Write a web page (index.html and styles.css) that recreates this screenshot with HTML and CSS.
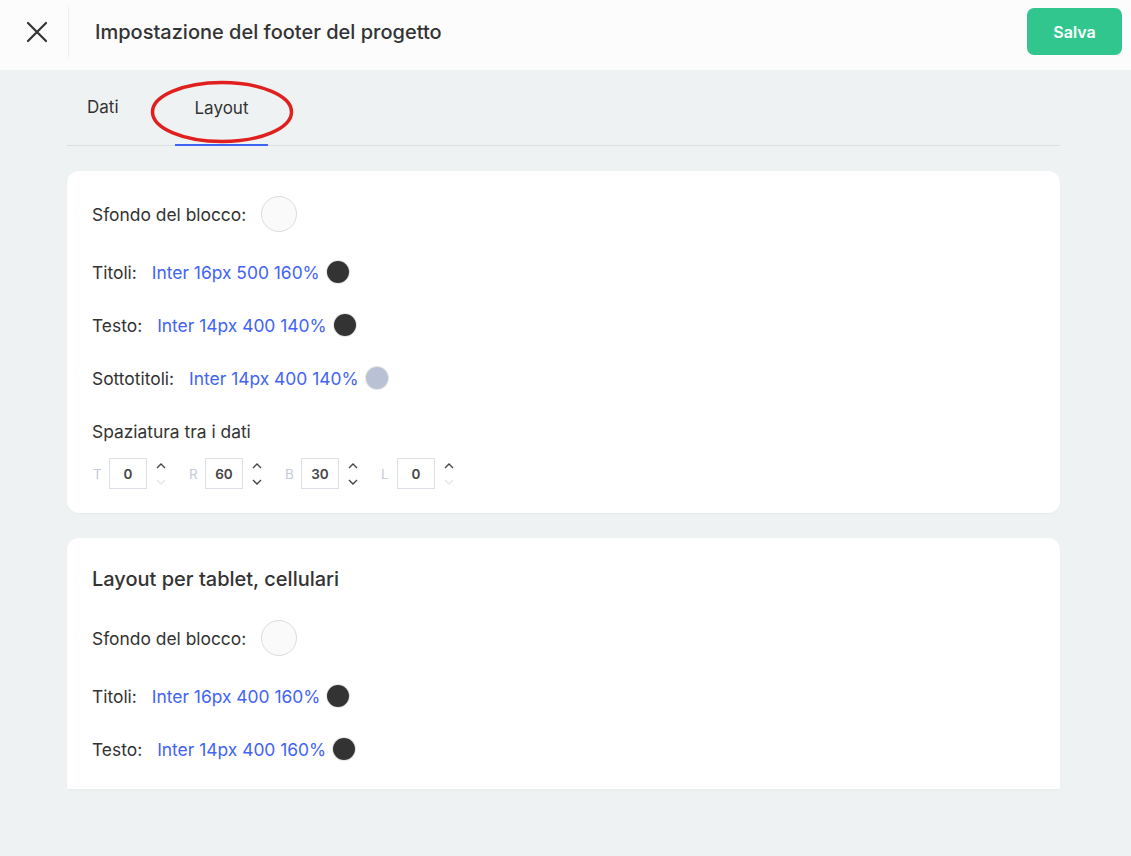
FILE: index.html
```html
<!DOCTYPE html>
<html lang="it">
<head>
    <meta charset="UTF-8">
    <title>Impostazione del footer del progetto</title>
    <link rel="stylesheet" href="styles.css">
</head>
<body>
    <header class="topbar">
        <button class="close-btn" aria-label="Chiudi">
            <svg width="22" height="22" viewBox="0 0 22 22"><path d="M2 2 L20 20 M20 2 L2 20" stroke="#333" stroke-width="2.2" stroke-linecap="round" fill="none"/></svg>
        </button>
        <h1 class="title">Impostazione del footer del progetto</h1>
        <button class="save-btn">Salva</button>
    </header>

    <main class="content">
        <nav class="tabs">
            <a class="tab">Dati</a>
            <a class="tab active">Layout</a>
        </nav>

        <section class="card">
            <div class="row row-swatch">
                <span class="label">Sfondo del blocco:</span>
                <span class="swatch"></span>
            </div>
            <div class="row">
                <span class="label">Titoli:</span>
                <a class="font-link">Inter 16px 500 160%</a>
                <span class="dot"></span>
            </div>
            <div class="row">
                <span class="label">Testo:</span>
                <a class="font-link">Inter 14px 400 140%</a>
                <span class="dot"></span>
            </div>
            <div class="row">
                <span class="label">Sottotitoli:</span>
                <a class="font-link">Inter 14px 400 140%</a>
                <span class="dot dot-light"></span>
            </div>
            <div class="row">
                <span class="label">Spaziatura tra i dati</span>
            </div>
            <div class="spacing">
                <div class="spin">
                    <span class="spin-label">T</span>
                    <span class="spin-box">0</span>
                    <span class="arrows">
                        <svg width="12" height="8" viewBox="0 0 12 8"><path d="M2 6 L6 2 L10 6" stroke="#444" stroke-width="1.4" fill="none"/></svg>
                        <svg width="12" height="8" viewBox="0 0 12 8"><path d="M2 2 L6 6 L10 2" stroke="#e4e6ea" stroke-width="1.4" fill="none"/></svg>
                    </span>
                </div>
                <div class="spin">
                    <span class="spin-label">R</span>
                    <span class="spin-box">60</span>
                    <span class="arrows">
                        <svg width="12" height="8" viewBox="0 0 12 8"><path d="M2 6 L6 2 L10 6" stroke="#444" stroke-width="1.4" fill="none"/></svg>
                        <svg width="12" height="8" viewBox="0 0 12 8"><path d="M2 2 L6 6 L10 2" stroke="#444" stroke-width="1.4" fill="none"/></svg>
                    </span>
                </div>
                <div class="spin">
                    <span class="spin-label">B</span>
                    <span class="spin-box">30</span>
                    <span class="arrows">
                        <svg width="12" height="8" viewBox="0 0 12 8"><path d="M2 6 L6 2 L10 6" stroke="#444" stroke-width="1.4" fill="none"/></svg>
                        <svg width="12" height="8" viewBox="0 0 12 8"><path d="M2 2 L6 6 L10 2" stroke="#444" stroke-width="1.4" fill="none"/></svg>
                    </span>
                </div>
                <div class="spin">
                    <span class="spin-label">L</span>
                    <span class="spin-box">0</span>
                    <span class="arrows">
                        <svg width="12" height="8" viewBox="0 0 12 8"><path d="M2 6 L6 2 L10 6" stroke="#444" stroke-width="1.4" fill="none"/></svg>
                        <svg width="12" height="8" viewBox="0 0 12 8"><path d="M2 2 L6 6 L10 2" stroke="#e4e6ea" stroke-width="1.4" fill="none"/></svg>
                    </span>
                </div>
            </div>
        </section>

        <section class="card card-cut">
            <h2 class="card-title">Layout per tablet, cellulari</h2>
            <div class="row row-swatch">
                <span class="label">Sfondo del blocco:</span>
                <span class="swatch"></span>
            </div>
            <div class="row">
                <span class="label">Titoli:</span>
                <a class="font-link">Inter 16px 400 160%</a>
                <span class="dot"></span>
            </div>
            <div class="row">
                <span class="label">Testo:</span>
                <a class="font-link">Inter 14px 400 160%</a>
                <span class="dot"></span>
            </div>
        </section>
    </main>

    <!-- annotation drawn over the Layout tab -->
    <svg class="mark" width="150" height="70" viewBox="0 0 150 70">
        <ellipse cx="75" cy="35" rx="69.5" ry="29.5" stroke="#e0201e" stroke-width="3.5" fill="none"/>
    </svg>
</body>
</html>
```

FILE: styles.css
```css
body {
    margin: 0;
    font-family: Inter, "Noto Sans", sans-serif;
    background: #eff2f3;
    color: #333;
    height: 856px;
    overflow: hidden;
}
.topbar {
    height: 70px;
    background: #fcfcfc;
    display: flex;
    align-items: center;
}
.close-btn {
    width: 69px;
    height: 50px;
    margin-top: -6px;
    border: none;
    border-right: 1px solid #ececec;
    background: none;
    display: flex;
    align-items: center;
    justify-content: center;
    padding: 0 0 0 5px;
}
.title {
    margin: -6px 0 0 26px;
    font-size: 20px;
    font-weight: 500;
    color: #333;
    flex: 1;
}
.save-btn {
    margin: -7px 9px 0 0;
    width: 95px;
    height: 47px;
    border: none;
    border-radius: 7px;
    background: #32c68f;
    color: #fff;
    font-family: inherit;
    font-size: 16px;
    font-weight: 600;
}
.content {
    width: 993px;
    margin-left: 67px;
}
.tabs {
    display: flex;
    gap: 37px;
    height: 75px;
    border-bottom: 1px solid #dcdfe1;
    padding-left: 1px;
}
.tab {
    padding: 0 19px;
    display: flex;
    align-items: center;
    font-size: 17px;
    color: #333;
    margin-top: 1px;
    box-sizing: border-box;
    border-bottom: 2px solid transparent;
}
.tab.active {
    border-bottom-color: #3f63f3;
    margin-bottom: -1px;
    padding: 0 20px;
}
.card {
    margin-top: 25px;
    background: #fff;
    border-radius: 12px;
    padding: 25px 25px 24px;
    box-shadow: 0 1px 2px rgba(0, 0, 0, 0.03);
}
.card-cut {
    height: 251px;
    box-sizing: border-box;
    border-radius: 12px 12px 0 0;
    padding-top: 28px;
    overflow: hidden;
}
.card-title {
    margin: 0;
    font-size: 20px;
    font-weight: 450;
    line-height: 26px;
    color: #333;
}
.row {
    display: flex;
    align-items: center;
    height: 26px;
    margin-bottom: 27px;
    font-size: 17.4px;
}
.card-title + .row {
    margin-top: 28px;
}
.row-swatch {
    height: 36px;
}
.label {
    margin-right: 15px;
}
.swatch {
    width: 34px;
    height: 34px;
    border-radius: 50%;
    border: 1px solid #dcdcdc;
    background: #fafafa;
}
.font-link {
    color: #4263f6;
    font-size: 17.4px;
}
.dot {
    width: 22px;
    height: 22px;
    border-radius: 50%;
    background: #333;
    margin-left: 7px;
    box-shadow: 0 0 0 1px #e6e6e6;
}
.dot-light {
    background: #b8c2d4;
}
.spacing {
    display: flex;
    margin-top: -13px;
    gap: 22px;
    padding-left: 1px;
}
.spin {
    display: flex;
    align-items: center;
}
.spin-label {
    font-size: 13.5px;
    color: #c3cbdc;
    width: 10px;
    margin-right: 6px;
}
.spin-box {
    width: 36px;
    height: 29px;
    border: 1px solid #dcdfea;
    display: flex;
    align-items: center;
    justify-content: center;
    font-size: 13.5px;
    font-weight: 600;
    color: #444;
}
.arrows {
    display: flex;
    flex-direction: column;
    gap: 8px;
    margin-left: 8px;
}
.mark {
    position: absolute;
    left: 147px;
    top: 77px;
}
```
